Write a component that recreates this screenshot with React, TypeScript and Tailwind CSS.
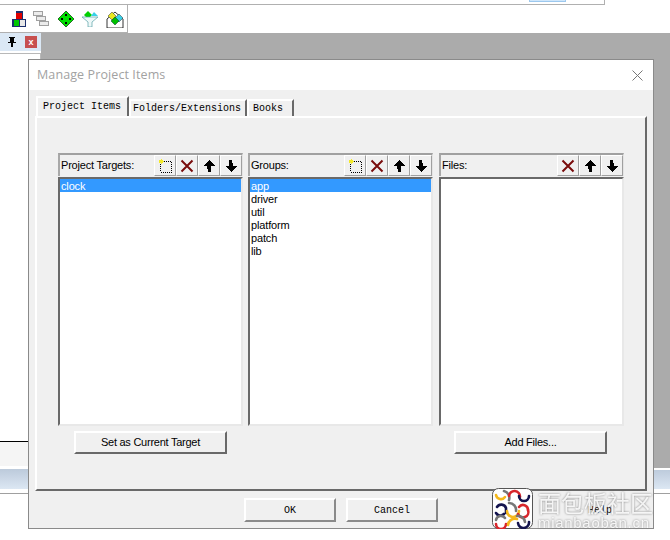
import React from "react";

const ui = "font-['Liberation_Sans',sans-serif]";
const simsun = "font-['Liberation_Mono',monospace]";

const NewIcon = () => (
  <svg width="16" height="16" viewBox="0 0 16 16" shapeRendering="crispEdges">
    <path d="M3.5 6v8M14.5 4v10M3.5 14.5h11M7 3.5h7" stroke="#000" strokeDasharray="1 1" fill="none" />
    <path d="M4 1v5M1.5 3.5h5M2.5 2l3 3M5.5 2l-3 3" stroke="#f2e92a" fill="none" />
  </svg>
);

const DeleteIcon = () => (
  <svg width="16" height="16" viewBox="0 0 16 16">
    <path d="M2.5 2.5l11 11M13.5 2.5l-11 11" stroke="#7a0c0c" strokeWidth="2" fill="none" />
  </svg>
);

const UpIcon = () => (
  <svg width="14" height="14" viewBox="0 0 14 14" shapeRendering="crispEdges">
    <path d="M7 1l6 6H9v6H6V10H5V7H1z" fill="#000" />
  </svg>
);

const DownIcon = () => (
  <svg width="14" height="14" viewBox="0 0 14 14" shapeRendering="crispEdges">
    <path d="M7 13L1 7h4V1h3v3h1v3h4z" fill="#000" />
  </svg>
);

const ToolButton = ({ children }: { children: React.ReactNode }) => (
  <button className="w-[22px] h-[21px] flex items-center justify-center bg-[#f0f0f0] border border-t-white border-l-white border-r-[#a0a0a0] border-b-[#a0a0a0]">
    {children}
  </button>
);

const ListColumn = ({
  title,
  items,
  canAdd = true,
}: {
  title: string;
  items: string[];
  canAdd?: boolean;
}) => (
  <div className="w-[185px] flex flex-col">
    <div className="h-[23px] flex items-center justify-between border-t-2 border-[#a0a0a0] border-r border-r-[#e4e4e4] border-l-2 border-l-[#a8a8a8] pl-[1px]">
      <span className="text-[11px] tracking-[-0.2px] text-black">{title}</span>
      <div className="flex">
        {canAdd && (
          <ToolButton>
            <NewIcon />
          </ToolButton>
        )}
        <ToolButton>
          <DeleteIcon />
        </ToolButton>
        <ToolButton>
          <UpIcon />
        </ToolButton>
        <ToolButton>
          <DownIcon />
        </ToolButton>
      </div>
    </div>
    <div className="mt-[1px] h-[249px] bg-white border-2 border-t-[#696969] border-l-[#696969] border-r-[#e8e8e8] border-b-[#e8e8e8]">
      {items.map((item, i) => (
        <div
          key={item}
          className={
            i === 0
              ? "h-[13px] leading-[15px] pl-[1px] text-[11px] tracking-[-0.15px] bg-[#3399ff] text-white"
              : "h-[13px] leading-[15px] pl-[1px] text-[11px] tracking-[-0.15px] text-black"
          }
        >
          {item}
        </div>
      ))}
    </div>
  </div>
);

const WideButton = ({ label }: { label: string }) => (
  <button className="w-[153px] h-[23px] bg-[#f0f0f0] text-[11px] tracking-[-0.25px] text-black border-2 border-t-white border-l-white border-r-[#696969] border-b-[#696969]">
    {label}
  </button>
);

const DialogButton = ({ label }: { label: string }) => (
  <button
    className={`${simsun} w-[92px] h-[24px] bg-[#f0f0f0] text-[10px] text-black border-2 border-t-white border-l-white border-r-[#8a8a8a] border-b-[#8a8a8a]`}
  >
    {label}
  </button>
);

const Logo = () => (
  <svg width="41" height="41" viewBox="0 0 41 41">
    <rect x="0.5" y="0.5" width="40" height="40" rx="6" fill="#fff" stroke="#555" />
    <g fill="none" strokeWidth="2.6" strokeLinecap="round">
      {/* row 1 */}
      <path d="M4 7a5 5 0 0 0 9 2" stroke="#f5b81c" />
      <path d="M12 3a7 7 0 0 1 5 9" stroke="#777" />
      <path d="M17 8a5.5 5.5 0 0 1 11 1" stroke="#d8262c" />
      <path d="M27 8a5 5 0 0 0 10 0" stroke="#14144e" />
      {/* row 2 */}
      <path d="M5 19a5 5 0 0 1 9 1v5" stroke="#14144e" />
      <path d="M4 25a5 5 0 0 0 8 1" stroke="#14144e" />
      <path d="M17 15a7 7 0 0 1 7 8" stroke="#777" />
      <path d="M15 23a6 6 0 0 0 12 0" stroke="#f5b81c" />
      <path d="M27 19a5 5 0 0 1 9 3" stroke="#d8262c" />
      <path d="M26 26a5 5 0 0 0 10-4" stroke="#d8262c" />
      {/* row 3 */}
      <path d="M4 32a5 5 0 0 1 9-2" stroke="#777" />
      <path d="M4 36a5 5 0 0 0 10 0" stroke="#d8262c" />
      <path d="M16 37a7 7 0 0 1 9-6" stroke="#f5b81c" />
      <path d="M25 28a7 7 0 0 1 8 6" stroke="#777" />
      <path d="M26 35a5.5 5.5 0 0 0 11-1" stroke="#14144e" />
    </g>
  </svg>
);

const ToolbarIcons = () => (
  <div className="flex items-center pl-[12px] h-full pt-[1px]">
    <svg width="14" height="16" viewBox="0 0 16 17" preserveAspectRatio="none" shapeRendering="crispEdges">
      <path d="M0 8h16v9H0z" fill="#1c2f6e" />
      <path d="M4 0h8v9H4z" fill="#1c2f6e" />
      <path d="M5 2h6v6H5z" fill="#e00000" />
      <path d="M2 10h6v6H2z" fill="#00c800" />
      <path d="M9 10h6v6H9z" fill="#e8e8e8" />
    </svg>
    <svg className="ml-[7px]" width="16" height="16" viewBox="0 0 16 16" shapeRendering="crispEdges">
      <path d="M0.5 0.5h9v4h-9zM3.5 5.5h9v4h-9zM6.5 10.5h9v4h-9z" fill="#ececec" stroke="#a0a0a0" />
    </svg>
    <svg className="ml-[9px]" width="16" height="16" viewBox="0 0 16 16">
      <path d="M8 0l8 8-8 8-8-8z" fill="#00e000" stroke="#003000" strokeWidth="0.7" />
      <path d="M7 3h2v2H7zM3 7h2v2H3zM11 7h2v2h-2zM7 11h2v2H7z" fill="#000" />
    </svg>
    <svg className="ml-[8px]" width="16" height="16" viewBox="0 0 16 16">
      <path d="M5 7l-3-3 4-4 4 4-3 3z" fill="#00d000" />
      <path d="M9 5l3-4 4 4z" fill="#38d0e8" />
      <path d="M0 6h16l-6 5v5H6v-5z" fill="#eef8f8" stroke="#58a0a8" strokeWidth="0.7" />
    </svg>
    <svg className="ml-[8px]" width="18" height="17" viewBox="0 0 18 17">
      <path d="M1 8l8-7 8 7v9H1z" fill="#fff" stroke="#000" strokeWidth="0.8" />
      <path d="M6 1l4 4-4 4-4-4z" fill="#e8e820" stroke="#333" strokeWidth="0.5" />
      <path d="M13 3l4 4-4 4-4-4z" fill="#38d0e8" stroke="#333" strokeWidth="0.5" />
      <path d="M9 6l4 4-4 4-4-4z" fill="#00c000" stroke="#033" strokeWidth="0.5" />
    </svg>
  </div>
);

export default function App() {
  return (
    <div className={`${ui} relative w-[670px] h-[540px] overflow-hidden bg-white`}>
      {/* IDE behind the dialog */}
      <div className="absolute left-0 top-0 w-[605px] h-[5px] bg-white border-r border-b border-[#b0b0b0]">
        <div className="absolute left-[529px] top-0 w-[37px] h-[2px] bg-[#cfe6fa] border-b border-x border-[#9cc8ee]" />
      </div>
      <div className="absolute left-0 top-[5px] w-[128px] h-[28px] bg-white border-r border-b border-[#b0b0b0]">
        <ToolbarIcons />
      </div>
      <div className="absolute left-[41px] top-[33px] w-[629px] h-[435px] bg-[#ababab]" />
      <div className="absolute left-0 top-[33px] w-[41px] h-[18px] flex items-center justify-end gap-[9px] pr-[4px] bg-[#dbe8f5]">
        <svg width="8" height="10" viewBox="0 0 8 10" shapeRendering="crispEdges">
          <path d="M1 0h6v1H6v4h2v1H5v4H3V6H0V5h2V1H1z" fill="#000" />
        </svg>
        <div className="w-[12px] h-[12px] bg-[#c75050] flex items-center justify-center text-white text-[9px] font-bold leading-none">
          x
        </div>
      </div>
      <div className="absolute left-0 top-[53px] w-[41px] h-[12px] border-t border-r border-[#b8b8b8]" />
      <div className="absolute left-0 top-[441px] w-[28px] h-[1px] bg-black" />
      <div className="absolute left-0 top-[442px] w-[28px] h-[24px] bg-[#f5f5f5]" />
      <div className="absolute left-0 top-[469px] w-[670px] h-[20px] bg-gradient-to-b from-[#bccadb] to-[#dce7f3]" />
      <div className="absolute left-0 top-[493px] w-[28px] h-[1px] bg-[#a0a0a0]" />
      <div className="absolute left-[653px] top-[468px] w-[17px] h-[2px] bg-white" />
      <div className="absolute left-[653px] top-[489px] w-[17px] h-[5px] bg-white border-b border-[#a0a0a0]" />

      {/* Manage Project Items dialog */}
      <div className="absolute left-[28px] top-[59px] w-[626px] h-[470px] flex flex-col bg-[#f0f0f0] border border-[#8a8a8a]">
        <div className="h-[30px] shrink-0 bg-white flex items-center justify-between pl-[8px] pr-[10px]">
          <span className="font-['Open_Sans',sans-serif] text-[12.5px] tracking-[0.1px] text-[#a2a2a2]">
            Manage Project Items
          </span>
          <svg width="11" height="11" viewBox="0 0 11 11">
            <path d="M0.5 0.5l10 10M10.5 0.5l-10 10" stroke="#777" fill="none" />
          </svg>
        </div>
        <div className="px-[6px] pt-[6px] flex flex-col">
          <div className={`${simsun} flex items-end h-[20px] text-[10px] text-black pl-[1px]`}>
            <div className="h-[20px] w-[93px] pl-[5px] pt-[1px] bg-[#f0f0f0] border-t-2 border-l-2 border-r-2 border-t-white border-l-white border-r-[#696969] relative z-10">
              Project Items
            </div>
            <div className="h-[17px] w-[118px] pl-[2px] bg-[#f0f0f0] border-t-2 border-l-2 border-r-2 border-t-white border-l-white border-r-[#696969]">
              Folders/Extensions
            </div>
            <div className="h-[17px] w-[47px] pl-[4px] bg-[#f0f0f0] border-t-2 border-l-2 border-r-2 border-t-white border-l-white border-r-[#696969]">
              Books
            </div>
          </div>
          <div className="h-[375px] w-[612px] flex flex-col pl-[21px] pt-[35px] border-2 border-t-white border-l-white border-r-[#696969] border-b-[#696969]">
            <div className="flex gap-[5px]">
              <ListColumn title="Project Targets:" items={["clock"]} />
              <ListColumn
                title="Groups:"
                items={["app", "driver", "util", "platform", "patch", "lib"]}
              />
              <div className="ml-[1px]">
                <ListColumn title="Files:" items={[]} canAdd={false} />
              </div>
            </div>
            <div className="flex gap-[227px] mt-[5px] pl-[16px]">
              <WideButton label="Set as Current Target" />
              <WideButton label="Add Files..." />
            </div>
          </div>
        </div>
        <div className="flex gap-[10px] pl-[215px] pt-[7px]">
          <DialogButton label="OK" />
          <DialogButton label="Cancel" />
          {/* Help sits under the watermark, its edges barely show */}
          <button className={`${simsun} ml-[106px] w-[92px] h-[24px] text-[10px] text-black`}>Help</button>
        </div>
      </div>

      {/* mianbaoban watermark */}
      <div className="absolute left-[492px] top-[488px] flex">
        <Logo />
        <div className="ml-[5px] flex flex-col items-start text-[#ffffffdd] drop-shadow-[0_0_1px_#777]">
          <span className="font-['Noto_Sans_CJK_SC',sans-serif] text-[23px] leading-[28px]">面包板社区</span>
          <span className="text-[15px] leading-[14px] tracking-[0.7px]">mianbaoban.cn</span>
        </div>
      </div>
    </div>
  );
}
